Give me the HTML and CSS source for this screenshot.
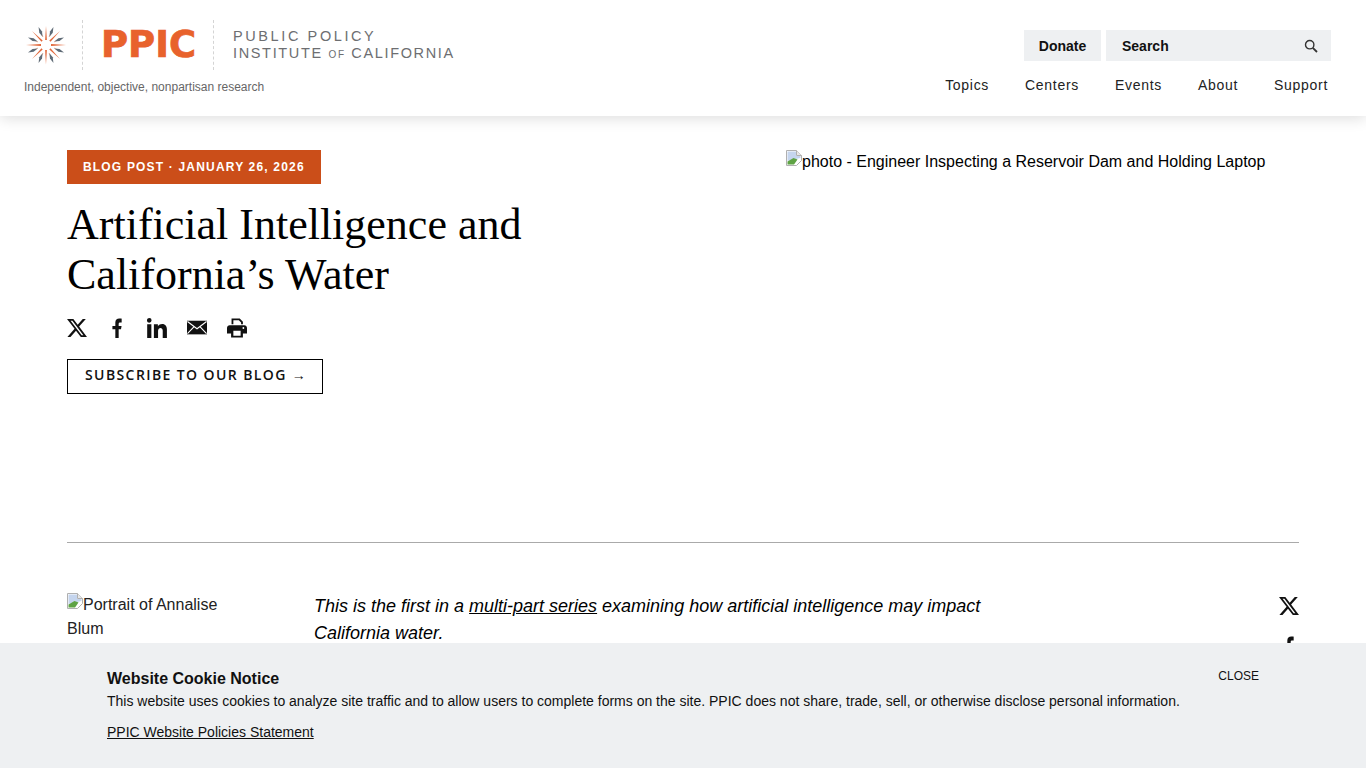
FILE: index.html
```html
<!DOCTYPE html>
<html lang="en">
<head>
  <meta charset="UTF-8" />
  <title>Artificial Intelligence and California's Water - PPIC</title>
  <meta name="viewport" content="width=device-width, initial-scale=1.0" />
  <link rel="stylesheet" href="styles.css">
</head>
<body>

  <!-- site header -->
  <header class="site-header">
    <div class="brand">
      <div class="logo">
        <svg class="logo-star" width="40" height="40" viewBox="-20 -20 40 40" aria-hidden="true">
          <g fill="#e2673a">
            <polygon points="-20,0 -5,-0.9 -5,0.9"/>
            <polygon points="20,0 5,-0.9 5,0.9"/>
            <polygon points="0,-19.500 -0.9,-5 0.9,-5"/>
            <polygon points="0,19.500 -0.9,5 0.9,5"/>
            <polygon points="-14,-14 -3.300,-4.500 -4.500,-3.300"/>
            <polygon points="14,-14 3.300,-4.500 4.500,-3.300"/>
            <polygon points="-14,14 -3.300,4.500 -4.500,3.300"/>
            <polygon points="14,14 3.300,4.500 4.500,3.300"/>
          </g>
          <g stroke="#eda78a" stroke-width="0.8">
            <line x1="-3" y1="-8" x2="-5" y2="-12"/>
            <line x1="3" y1="8" x2="5" y2="12"/>
            <line x1="3" y1="-8" x2="5" y2="-12"/>
            <line x1="-3" y1="8" x2="-5" y2="12"/>
            <line x1="-8" y1="-3" x2="-12" y2="-5"/>
            <line x1="8" y1="3" x2="12" y2="5"/>
            <line x1="8" y1="-3" x2="12" y2="-5"/>
            <line x1="-8" y1="3" x2="-12" y2="5"/>
          </g>
          <g fill="#5f6b76">
            <polygon points="0,-19.500 1.500,-14 0,-9 -1.500,-14" transform="rotate(22.5)"/>
            <polygon points="0,-19.500 1.500,-14 0,-9 -1.500,-14" transform="rotate(67.5)"/>
            <polygon points="0,-19.500 1.500,-14 0,-9 -1.500,-14" transform="rotate(112.5)"/>
            <polygon points="0,-19.500 1.500,-14 0,-9 -1.500,-14" transform="rotate(157.5)"/>
            <polygon points="0,-19.500 1.500,-14 0,-9 -1.500,-14" transform="rotate(202.5)"/>
            <polygon points="0,-19.500 1.500,-14 0,-9 -1.500,-14" transform="rotate(247.5)"/>
            <polygon points="0,-19.500 1.500,-14 0,-9 -1.500,-14" transform="rotate(292.5)"/>
            <polygon points="0,-19.500 1.500,-14 0,-9 -1.500,-14" transform="rotate(337.5)"/>
          </g>
        </svg>
        <span class="logo-rule"></span>
        <span class="logo-mark">PPIC</span>
        <span class="logo-rule"></span>
        <span class="logo-name"><span class="logo-line1">PUBLIC POLICY</span><br>INSTITUTE <small>OF</small> CALIFORNIA</span>
      </div>
      <p class="tagline">Independent, objective, nonpartisan research</p>
    </div>

    <div class="header-right">
      <div class="tools">
        <a class="donate">Donate</a>
        <div class="search">
          <span>Search</span>
          <svg width="14" height="14" viewBox="0 0 14 14" fill="none" stroke="#333" aria-hidden="true">
            <circle cx="5.7" cy="5.7" r="4.2" stroke-width="1.4"/>
            <line x1="8.8" y1="8.8" x2="13" y2="13" stroke-width="1.8"/>
          </svg>
        </div>
      </div>
      <nav class="main-nav">
        <a>Topics</a>
        <a>Centers</a>
        <a>Events</a>
        <a>About</a>
        <a>Support</a>
      </nav>
    </div>
  </header>

  <main class="page">
    <!-- hero -->
    <section class="hero">
      <div class="hero-text">
        <div class="post-tag">BLOG POST · JANUARY 26, 2026</div>
        <h1>Artificial Intelligence and California’s Water</h1>
        <div class="share">
          <svg class="icon" viewBox="0 0 24 24"><path d="M18.901 1.153h3.68l-8.04 9.19L24 22.846h-7.406l-5.8-7.584-6.638 7.584H.474l8.6-9.83L0 1.154h7.594l5.243 6.932ZM17.61 20.644h2.039L6.486 3.24H4.298Z"/></svg>
          <svg class="icon" viewBox="0 0 24 24"><path d="M14 13.5h2.8l.7-4H14V7.2c0-1.100.3-1.900 2-1.900h1.600V.8C17.200.7 16 .6 14.700.6 11.900.6 10 2.300 10 5.500v4H6.500v4H10V24h4z"/></svg>
          <svg class="icon" viewBox="2 1.500 21.500 21.500"><path d="M6.940 4a2.500 2.500 0 1 1-5 0 2.500 2.500 0 0 1 5 0zM6.700 8.200H2.200V23h4.500zM13.700 8.200H9.400V23h4.500v-7.600c0-4 5-4.300 5-.1V23h4.500v-9.100c0-7.300-7.600-7-9.700-3.400z"/></svg>
          <svg class="icon" viewBox="1 1 22 22">
            <path d="M1 4h22v15H1z"/>
            <path d="M1.500 4.800 12 12.800 22.500 4.800M1.500 18.200 8.800 10.600M22.500 18.200 15.200 10.600" fill="none" stroke="#fff" stroke-width="1.200"/>
          </svg>
          <svg class="icon" viewBox="1 1.500 22 21"><path d="M6 1.500h9l3.500 3.500v3h-2V6L14 3.500H8V8H6zM4 9h16c1.700 0 3 1.300 3 3v6h-4.500v4.500h-13V18H1v-6c0-1.700 1.300-3 3-3zM8 15v5.500h8V15zM19 11a1 1 0 1 0 0 2 1 1 0 0 0 0-2z"/></svg>
        </div>
        <a class="subscribe">SUBSCRIBE TO OUR BLOG <span class="arrow">→</span></a>
      </div>
      <div class="hero-photo">
        <svg class="broken-img" width="16" height="16" viewBox="0 0 16 16" aria-hidden="true">
          <path d="M.5.5h10l5 5v5l-5 5H.5z" fill="#fff" stroke="#b0b0b0"/>
          <path d="M1.500 1.500h8.500v4.500h4.500v2L1.500 11z" fill="#c5d5ee"/>
          <path d="M1.500 14.500V11.500l6-3.500 4 1.500-3.500 5z" fill="#5fa345"/>
          <path d="M10.500.5v5h5" fill="#e8e8e8" stroke="#b0b0b0"/>
        </svg>photo - Engineer Inspecting a Reservoir Dam and Holding Laptop
      </div>
    </section>

    <hr class="divider">

    <!-- article -->
    <section class="article">
      <div class="author">
        <svg class="broken-img" width="16" height="16" viewBox="0 0 16 16" aria-hidden="true">
          <path d="M.5.5h10l5 5v5l-5 5H.5z" fill="#fff" stroke="#b0b0b0"/>
          <path d="M1.500 1.500h8.500v4.500h4.500v2L1.500 11z" fill="#c5d5ee"/>
          <path d="M1.500 14.500V11.500l6-3.500 4 1.500-3.500 5z" fill="#5fa345"/>
          <path d="M10.500.5v5h5" fill="#e8e8e8" stroke="#b0b0b0"/>
        </svg>Portrait of Annalise Blum
      </div>
      <div class="article-body">
        <p><em>This is the first in a <a>multi-part series</a> examining how artificial intelligence may impact California water.</em></p>
      </div>
      <div class="article-share">
        <svg class="icon-lg" viewBox="0 0 24 24"><path d="M18.901 1.153h3.68l-8.04 9.19L24 22.846h-7.406l-5.8-7.584-6.638 7.584H.474l8.6-9.83L0 1.154h7.594l5.243 6.932ZM17.61 20.644h2.039L6.486 3.24H4.298Z"/></svg>
        <svg class="icon-lg" viewBox="0 0 24 24"><path d="M14 13.5h2.8l.7-4H14V7.2c0-1.100.3-1.900 2-1.900h1.600V.8C17.200.7 16 .6 14.700.6 11.900.6 10 2.300 10 5.500v4H6.500v4H10V24h4z"/></svg>
      </div>
    </section>
  </main>

  <!-- cookie notice -->
  <aside class="cookie">
    <div class="cookie-text">
      <h2>Website Cookie Notice</h2>
      <p>This website uses cookies to analyze site traffic and to allow users to complete forms on the site. PPIC does not share, trade, sell, or otherwise disclose personal information.</p>
      <a>PPIC Website Policies Statement</a>
    </div>
    <button class="cookie-close">CLOSE</button>
  </aside>

</body>
</html>
```

FILE: styles.css
```css
html {
  overflow: hidden;
}

body {
  margin: 0;
  background: #fff;
  color: #000;
  font-family: 'Liberation Sans', Arial, sans-serif;
}

a {
  color: inherit;
}

/* header */
.site-header {
  height: 116px;
  box-sizing: border-box;
  padding: 20px 35px 0 24px;
  display: flex;
  justify-content: space-between;
  background: #fff;
  box-shadow: 0 2px 14px rgba(0, 0, 0, 0.14);
}

.logo {
  display: flex;
  align-items: center;
  height: 50px;
}

.logo-star {
  margin: 0 16px 0 2px;
}

.logo-rule {
  width: 0;
  height: 50px;
  border-left: 1px dashed #d4d4d4;
}

.logo-mark {
  width: 94px;
  margin: 0 18px;
  font-family: 'DejaVu Sans', sans-serif;
  font-weight: bold;
  font-size: 37px;
  line-height: 50px;
  color: #e8622c;
  letter-spacing: 0;
  -webkit-text-stroke: 0.7px #e8622c;
  white-space: nowrap;
}

.logo-name {
  margin-left: 19px;
  font-size: 14.5px;
  line-height: 17px;
  letter-spacing: 1.65px;
  color: #6d6e71;
  white-space: nowrap;
}

.logo-line1 {
  letter-spacing: 2.6px;
}

.logo-name small {
  font-size: 10px;
}

.tagline {
  margin: 9px 0 0;
  font-size: 12px;
  line-height: 16px;
  color: #666;
}

.header-right {
  display: flex;
  flex-direction: column;
  align-items: flex-end;
  padding-top: 10px;
}

.tools {
  display: flex;
  gap: 5px;
}

.donate {
  width: 77px;
  height: 31px;
  background: #eef0f2;
  font-size: 14px;
  font-weight: bold;
  line-height: 32px;
  text-align: center;
  color: #111;
}

.search {
  width: 225px;
  height: 31px;
  box-sizing: border-box;
  padding: 0 13px 0 16px;
  display: flex;
  align-items: center;
  justify-content: space-between;
  background: #eef0f2;
  font-size: 14px;
  font-weight: bold;
  color: #111;
}

.main-nav {
  margin-top: 16px;
  padding-right: 3px;
  display: flex;
  gap: 36px;
  font-size: 14px;
  line-height: 16px;
  letter-spacing: 0.7px;
  color: #222;
}

/* page */
.page {
  padding: 34px 67px 0;
}

.hero {
  height: 392px;
  display: flex;
  justify-content: space-between;
}

.hero-text {
  width: 500px;
}

.post-tag {
  display: inline-block;
  padding: 0 16px;
  height: 34px;
  background: #cb4e19;
  color: #fff;
  font-size: 12px;
  font-weight: bold;
  line-height: 34px;
  letter-spacing: 1.18px;
}

h1 {
  margin: 16px 0 0;
  font-family: 'Liberation Serif', 'Times New Roman', serif;
  font-size: 44px;
  font-weight: normal;
  line-height: 50px;
}

.share {
  margin-top: 18px;
  display: flex;
  gap: 20px;
}

.icon {
  width: 20px;
  height: 20px;
  fill: #111;
}

.subscribe {
  margin-top: 21px;
  width: 256px;
  height: 35px;
  box-sizing: border-box;
  display: block;
  border: 1px solid #000;
  padding-left: 17px;
  font-family: 'Open Sans', 'Liberation Sans', sans-serif;
  font-size: 14px;
  font-weight: 600;
  line-height: 29px;
  letter-spacing: 1.4px;
  white-space: nowrap;
  color: #111;
}

.arrow {
  font-family: 'Liberation Sans', sans-serif;
  letter-spacing: 0;
}

.hero-photo {
  width: 513px;
  font-size: 16px;
  line-height: 24px;
}

.broken-img {
  vertical-align: 1px;
}

.divider {
  margin: 0;
  border: 0;
  border-top: 1px solid #aaa;
}

.article {
  margin-top: 50px;
  display: flex;
}

.author {
  width: 247px;
  padding-right: 70px;
  box-sizing: border-box;
  font-size: 16px;
  line-height: 24px;
  color: #222;
}

.article-body {
  width: 680px;
  font-size: 18px;
  line-height: 27px;
}

.article-body p {
  margin: 0;
}

.article-body a {
  text-decoration: underline;
}

.article-share {
  margin-left: auto;
  width: 20px;
  display: flex;
  flex-direction: column;
  gap: 20px;
  padding-top: 3px;
}

.icon-lg {
  width: 20px;
  height: 20px;
  fill: #111;
}

/* cookie notice */
.cookie {
  position: fixed;
  left: 0;
  right: 0;
  bottom: 0;
  height: 125px;
  box-sizing: border-box;
  padding: 26px 107px 0;
  display: flex;
  justify-content: space-between;
  align-items: flex-start;
  background: #eef0f2;
  color: #111;
}

.cookie-text {
  padding-top: 1px;
}

.cookie h2 {
  margin: 0;
  font-size: 16px;
  line-height: 18px;
}

.cookie p {
  margin: 5px 0 14px;
  font-size: 14px;
  line-height: 16px;
}

.cookie a {
  font-size: 14px;
  line-height: 16px;
  text-decoration: underline;
}

.cookie-close {
  border: 0;
  padding: 0;
  background: none;
  font-family: inherit;
  font-size: 12px;
  line-height: 14px;
  color: #111;
}
```
